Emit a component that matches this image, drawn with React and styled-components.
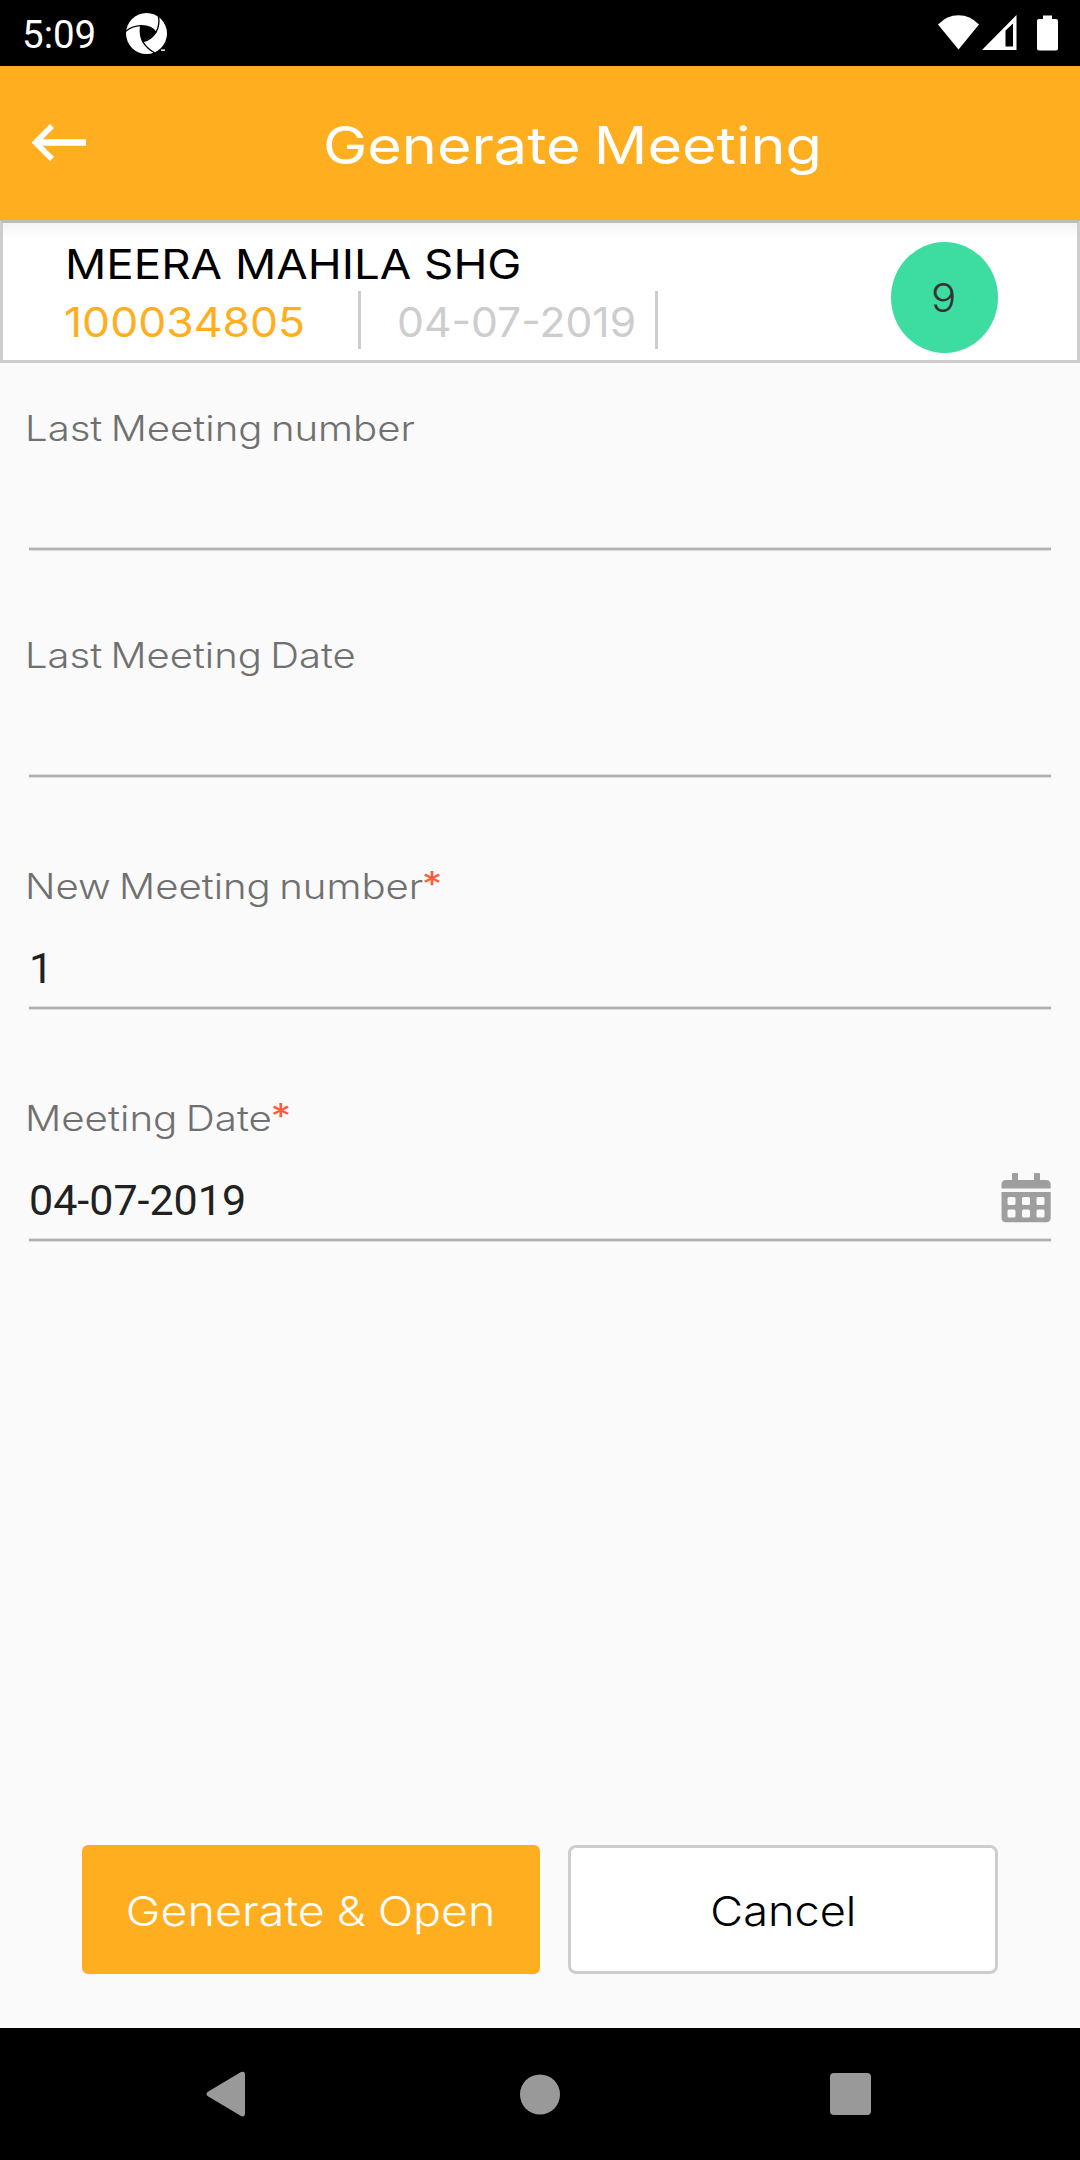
import React from "react";
import styled, { createGlobalStyle } from "styled-components";

const amber = "#ffae20";
const line = "#cdcdcd";

const GlobalStyle = createGlobalStyle`
  * { box-sizing: border-box; }
  body { margin: 0; background: #fafafa; }
`;

const Screen = styled.div`
  display: flex;
  flex-direction: column;
  width: 1080px;
  height: 2160px;
  background: #fafafa;
  font-family: Inter, "Open Sans", sans-serif;
`;

/* Wide display text: glyphs are stretched horizontally, with tighter word gaps. */
const Wide = styled.span`
  display: inline-block;
  white-space: nowrap;
  word-spacing: ${(p) => p.$gap || 0}px;
  transform: scaleX(${(p) => p.$stretch});
  transform-origin: ${(p) => p.$origin || "left"} center;
`;

const StatusBar = styled.header`
  display: flex;
  height: 66px;
  padding: 0 22px;
  background: #000;
`;

const Clock = styled.div`
  width: 104px;
  font: 400 38.5px/70px Roboto, sans-serif;
  color: #fff;
`;

const StatusIcon = styled.svg`
  display: block;
  flex: none;
  margin-top: ${(p) => p.$top}px;
  margin-left: ${(p) => p.$left || 0}px;
`;

const StatusRight = styled.div`
  display: flex;
  margin-left: auto;
`;

const AppBar = styled.div`
  display: flex;
  height: 154px;
  padding-left: 32px;
  background: ${amber};
`;

const BackButton = styled.button`
  display: block;
  width: 54px;
  height: 154px;
  padding: 0;
  border: 0;
  background: none;
  svg { display: block; margin-top: -1px; }
`;

const Title = styled.h1`
  margin: 0 0 0 237px;
  font-size: 52px;
  font-weight: 400;
  line-height: 160px;
  color: #fff;
`;

const GroupCard = styled.section`
  display: flex;
  justify-content: space-between;
  height: 143px;
  padding: 0 79px 0 62px;
  border: 3px solid ${line};
  border-top-color: #bcbcbc;
  background: linear-gradient(#f4f4f4, #fff 16px);
`;

const GroupInfo = styled.div`
  padding-top: 14px;
`;

const GroupName = styled.div`
  height: 54px;
  font-size: 41px;
  line-height: 54px;
  color: #000;
`;

const GroupMeta = styled.div`
  display: flex;
  height: 58px;
  margin-left: -1px;
`;

const MetaItem = styled.div`
  width: ${(p) => p.$width}px;
  padding-left: ${(p) => p.$indent || 0}px;
  border-right: 3px solid ${line};
  font-size: 41px;
  line-height: 62px;
  color: ${(p) => p.$color};
`;

const CountBadge = styled.div`
  width: 107px;
  height: 111px;
  margin-top: 19px;
  padding-right: 2px;
  border-radius: 50%;
  background: #3ddca0;
  font-size: 39px;
  font-weight: 300;
  line-height: 112px;
  text-align: center;
  color: #333;
`;

const Form = styled.main`
  display: flex;
  flex: 1;
  flex-direction: column;
  padding: 44px 29px 0;
`;

const Field = styled.div`
  margin-bottom: ${(p) => p.$gap}px;
`;

const Label = styled.div`
  height: 42px;
  margin-left: -4.5px;
  font-size: 35px;
  font-weight: 300;
  line-height: 42px;
  color: #707070;
`;

const Required = styled.span`
  margin-left: -1px;
  font-weight: 400;
  line-height: 0;
  vertical-align: 2px;
  color: #ff5a3c;
`;

const Value = styled.div`
  display: flex;
  justify-content: space-between;
  height: ${(p) => p.$height}px;
  padding-top: 24px;
  font: 400 43px/75px Roboto, sans-serif;
  color: #212121;
  svg { display: block; margin-top: 10px; }
`;

const Underline = styled.div`
  height: 4px;
  border: solid #dedede;
  border-width: 1px 0;
  background: #b0b0b0;
`;

const Actions = styled.footer`
  display: flex;
  gap: 28px;
  padding: 0 82px 54px;
`;

const Button = styled.button`
  width: ${(p) => p.$width}px;
  height: 129px;
  padding: 3px 0 0;
  border: 3px solid ${(p) => (p.$primary ? amber : line)};
  border-radius: ${(p) => (p.$primary ? 6 : 8)}px;
  background: ${(p) => (p.$primary ? amber : "#fff")};
  font: 300 41px/120px Inter, sans-serif;
  color: ${(p) => (p.$primary ? "#fff" : "#000")};
`;

const NavBar = styled.nav`
  display: flex;
  align-items: center;
  height: 132px;
  padding-left: 206px;
  background: #000;
  svg { display: block; }
`;

const NavItem = styled.div`
  margin-right: ${(p) => p.$gap || 0}px;
`;

const ApertureLogo = () => (
  <StatusIcon $top={13} width="42" height="42" viewBox="0 0 126 126">
    <circle cx="61.5" cy="61.5" r="61.5" fill="#fff" />
    <path d="M44 38Q76 37 90 58Q74 80 50 86Q40 64 44 38Z" fill="#000" />
    <g fill="none" stroke="#000" strokeWidth="4">
      <path d="M-1 55Q18 39 44 38Q76 37 90 58" />
      <path d="M97 8Q103 34 90 58Q74 82 50 86" />
      <path d="M44 38Q40 66 50 86Q64 108 88 121" />
    </g>
    <path d="M84 124Q92 113 99 114L126 114V126H84Z" fill="#000" />
    <path d="M105 109H117V114H105Z" fill="#ddd" />
  </StatusIcon>
);

const CalendarIcon = () => (
  <svg width="50" height="50" viewBox="0 0 50 50" fill="#9e9e9e">
    <path d="M0.500 15.500V12Q0.500 7 5 7H11V1Q11 0 12 0H16Q17 0 17 1V7H33V1Q33 0 34 0H38Q39 0 39 1V7H45Q49.700 7 49.700 12V15.500Z" />
    <path fillRule="evenodd" d="M0.500 19H49.700V44.500Q49.700 49.300 45 49.300H5Q0.500 49.300 0.500 44.500ZM8 24q-1.500 0-1.500 1.500v5q0 1.500 1.500 1.500h5q1.500 0 1.500-1.500v-5q0-1.500-1.500-1.500zM22.500 24q-1.500 0-1.500 1.500v5q0 1.500 1.500 1.500h5q1.500 0 1.500-1.500v-5q0-1.500-1.500-1.500zM37 24q-1.500 0-1.500 1.500v5q0 1.500 1.500 1.500h5q1.500 0 1.500-1.500v-5q0-1.500-1.500-1.500zM8 36.500q-1.500 0-1.500 1.500v5q0 1.500 1.500 1.500h5q1.500 0 1.500-1.500v-5q0-1.500-1.500-1.500zM22.500 36.500q-1.500 0-1.500 1.500v5q0 1.500 1.500 1.500h5q1.500 0 1.500-1.500v-5q0-1.500-1.500-1.500zM37 36.500q-1.500 0-1.500 1.500v5q0 1.500 1.500 1.500h5q1.500 0 1.500-1.500v-5q0-1.500-1.500-1.500z" />
  </svg>
);

const fields = [
  { label: "Last Meeting number", stretch: 1.146, height: 98, gap: 83 },
  { label: "Last Meeting Date", stretch: 1.143, height: 98, gap: 87 },
  { label: "New Meeting number", stretch: 1.146, height: 99, gap: 87, value: "1", required: true },
  { label: "Meeting Date", stretch: 1.151, height: 99, gap: 0, value: "04-07-2019", required: true, calendar: true },
];

export default function App() {
  return (
    <Screen>
      <GlobalStyle />
      <StatusBar>
        <Clock>5:09</Clock>
        <ApertureLogo />
        <StatusRight>
          <StatusIcon $top={15} width="41" height="35" viewBox="0 0 41 35" fill="#fff">
            <path d="M20.500 34.500L0 9.500Q9 0.300 20.500 0.300T41 9.500Z" />
          </StatusIcon>
          <StatusIcon $top={15} $left={3} width="35" height="35" viewBox="0 0 35 35" fill="#fff">
            <path fillRule="evenodd" d="M0 35L34.500 0V35ZM23.500 15.500V31.500H31V8.500Z" />
          </StatusIcon>
          <StatusIcon $top={15} $left={20} width="21" height="36" viewBox="0 0 21 36" fill="#fff">
            <path d="M6 0.500H15V4H19Q21 4 21 6V33.500Q21 35.500 19 35.500H2Q0 35.500 0 33.500V6Q0 4 2 4H6Z" />
          </StatusIcon>
        </StatusRight>
      </StatusBar>

      <AppBar>
        <BackButton aria-label="Back">
          <svg width="54" height="38" viewBox="0 0 54 38" fill="none" stroke="#fff">
            <path d="M54 18.500H7" strokeWidth="6.600" />
            <path d="M20 2L3.500 18.500L20 35" strokeWidth="5.600" />
          </svg>
        </BackButton>
        <Title><Wide $stretch={1.141} $gap={-3}>Generate Meeting</Wide></Title>
      </AppBar>

      <GroupCard>
        <GroupInfo>
          <GroupName><Wide $stretch={1.114}>MEERA MAHILA SHG</Wide></GroupName>
          <GroupMeta>
            <MetaItem $width={297} $color={amber}><Wide $stretch={1.085}>100034805</Wide></MetaItem>
            <MetaItem $width={297} $indent={35.5} $color={line}><Wide $stretch={1.04}>04-07-2019</Wide></MetaItem>
          </GroupMeta>
        </GroupInfo>
        <CountBadge><Wide $origin="center" $stretch={1.08}>9</Wide></CountBadge>
      </GroupCard>

      <Form>
        {fields.map((f) => (
          <Field key={f.label} $gap={f.gap}>
            <Label>
              <Wide $stretch={f.stretch} $gap={-2.5}>{f.label}{f.required && <Required>*</Required>}</Wide>
            </Label>
            <Value $height={f.height}>
              <span>{f.value}</span>
              {f.calendar && <CalendarIcon />}
            </Value>
            <Underline />
          </Field>
        ))}
      </Form>

      <Actions>
        <Button $primary $width={458}><Wide $origin="center" $stretch={1.136} $gap={-1}>Generate &amp; Open</Wide></Button>
        <Button $width={430}><Wide $origin="center" $stretch={1.1}>Cancel</Wide></Button>
      </Actions>

      <NavBar>
        <NavItem $gap={274}>
          <svg width="40" height="46" viewBox="0 0 40 46" fill="#999">
            <path d="M1.500 21L35 1Q39 -0.500 39 4V42Q39 46.500 35 45L1.500 25Q-0.500 23 1.500 21Z" />
          </svg>
        </NavItem>
        <NavItem $gap={270}>
          <svg width="40" height="41" viewBox="0 0 40 41"><circle cx="20" cy="20.500" r="20" fill="#999" /></svg>
        </NavItem>
        <NavItem>
          <svg width="41" height="42" viewBox="0 0 41 42"><rect width="41" height="42" rx="4" fill="#999" /></svg>
        </NavItem>
      </NavBar>
    </Screen>
  );
}
